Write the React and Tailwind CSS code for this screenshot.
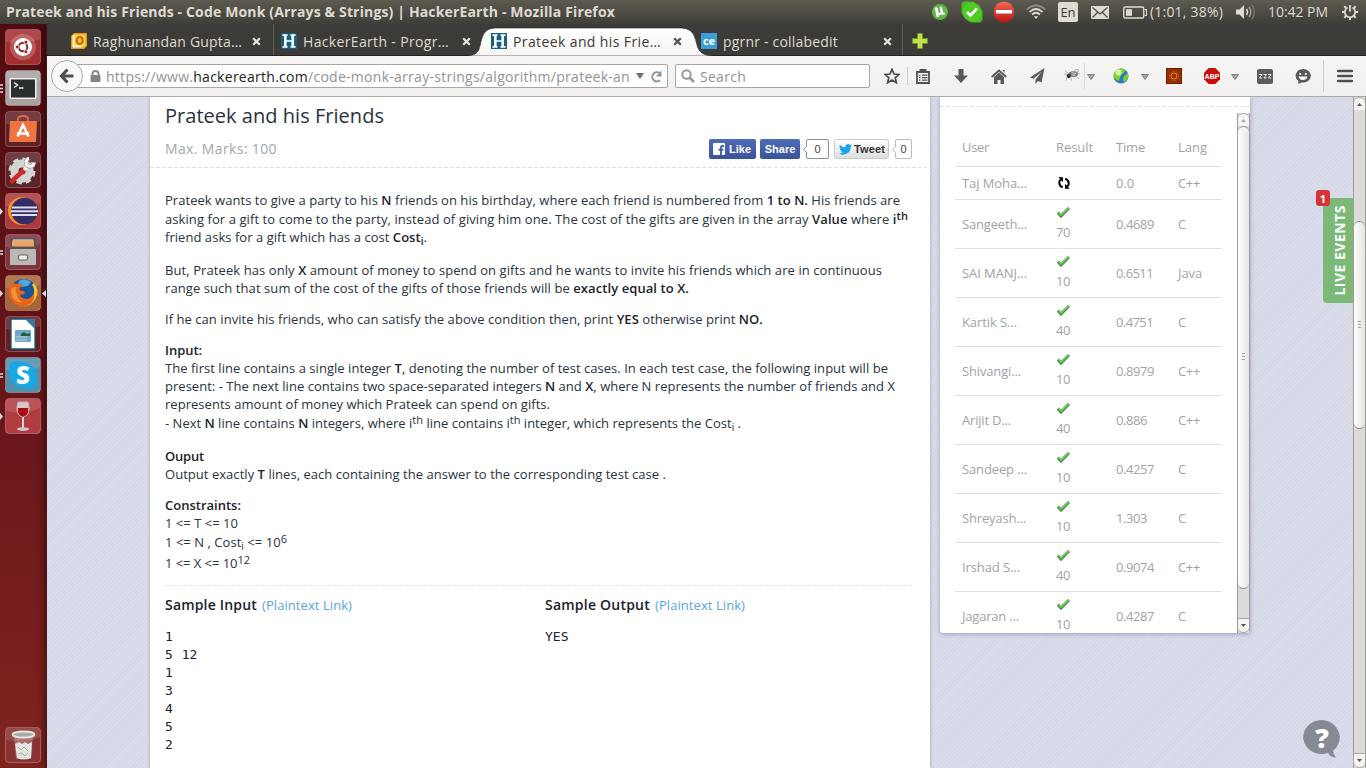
import React, { useLayoutEffect, useRef } from "react";

/* Single line of text whose letter spacing is adjusted so it fills `w` pixels. */
function Fit({ w, className = "", children }) {
  const ref = useRef(null);
  useLayoutEffect(() => {
    const el = ref.current;
    el.style.letterSpacing = "0px";
    const natural = el.getBoundingClientRect().width;
    el.style.letterSpacing = (w - natural) / el.textContent.length + "px";
  }, [w]);
  return (
    <span ref={ref} className={"inline-block shrink-0 justify-self-start whitespace-pre " + className}>
      {children}
    </span>
  );
}

const Sup = ({ children }) => <span className="relative -top-[4px] text-[11px] leading-none">{children}</span>;
const Sub = ({ children }) => <span className="relative top-[3px] text-[10px] leading-none">{children}</span>;
const B = ({ children }) => <b className="font-semibold text-[#1b222b]">{children}</b>;

/* ---------- top panel ---------- */
function TopPanel() {
  return (
    <header className="flex h-6 shrink-0 items-center bg-linear-to-b from-[#5d5a50] to-[#403e39] pl-[6px] font-['Open_Sans',sans-serif] text-[14px] leading-6 text-[#dfdbd2]">
      <Fit w={609} className="font-bold">Prateek and his Friends - Code Monk (Arrays &amp; Strings) | HackerEarth - Mozilla Firefox</Fit>
      <svg className="ml-[317px] shrink-0" width="16" height="18" viewBox="0 0 16 18">
        <circle cx="8" cy="9" r="8" fill="#62b54a" />
        <path d="M3.800 4.500l2 9.500M4.500 5l1 4.500c.8 2.500 4 2 4.200-.5L8.800 4M9.600 8.500c.4 2 1.500 2.600 3 1.800" fill="none" stroke="#fff" strokeWidth="2.300" />
      </svg>
      <svg className="ml-[13px] shrink-0" width="22" height="22" viewBox="0 0 22 22">
        <rect x=".5" y=".5" width="14" height="14" rx="4" fill="#45c31c" />
        <rect x="7.500" y="7.500" width="14" height="14" rx="4" fill="#45c31c" />
        <circle cx="11" cy="11" r="9.500" fill="#50cb24" />
        <path d="M6 11l3.500 3.500L16 7.500" fill="none" stroke="#fff" strokeWidth="2.800" />
      </svg>
      <svg className="ml-[10px] shrink-0" width="22" height="22" viewBox="0 0 22 22">
        <defs><linearGradient id="stop" x2="0" y2="1"><stop stopColor="#f0685c" /><stop offset="1" stopColor="#b8140f" /></linearGradient></defs>
        <circle cx="11" cy="11" r="10.500" fill="url(#stop)" />
        <rect x="3" y="9" width="16" height="3.500" fill="#fff" />
      </svg>
      <svg className="ml-[11px] shrink-0" width="20" height="16" viewBox="0 0 20 16" fill="none" strokeWidth="1.700">
        <path d="M.7 5.500Q10-2.500 19.300 5.500" stroke="#8d8a82" />
        <path d="M3.500 8Q10 2 16.500 8" stroke="#dfdbd2" />
        <path d="M6 10.500Q10 7 14 10.500" stroke="#dfdbd2" />
        <path d="M7.800 12.300h4.400L10 15z" fill="#dfdbd2" stroke="none" />
      </svg>
      <span className="ml-[12px] flex h-5 w-5 shrink-0 items-center justify-center rounded-[2px] bg-[#dfdbd2] text-[13px] leading-none text-[#3c3b37]">En</span>
      <svg className="ml-[13px] shrink-0" width="18" height="13" viewBox="0 0 18 13">
        <rect width="18" height="13" rx="1" fill="#dfdbd2" />
        <path d="M1.500 1.500L9 8l7.500-6.500M1.500 11.500l5-5M16.500 11.500l-5-5" fill="none" stroke="#4c4a43" strokeWidth="1.200" />
      </svg>
      <svg className="ml-[14px] shrink-0" width="24" height="13" viewBox="0 0 24 13">
        <rect x=".75" y="1" width="20" height="11" rx="1.500" fill="none" stroke="#dfdbd2" strokeWidth="1.400" />
        <rect x="3" y="3.200" width="6" height="6.600" fill="#dfdbd2" />
        <path d="M21.500 3.500h2v6h-2" fill="none" stroke="#dfdbd2" strokeWidth="1.200" />
      </svg>
      <Fit w={73} className="ml-[3px]">(1:01, 38%)</Fit>
      <svg className="ml-[13px] shrink-0" width="20" height="16" viewBox="0 0 20 16" fill="none" strokeWidth="1.500">
        <path d="M0 5.500h3.500L8 1v14l-4.500-4.500H0z" fill="#dfdbd2" />
        <path d="M10.500 5q2 3 0 6" stroke="#dfdbd2" />
        <path d="M13 3q3.500 5 0 10" stroke="#a3a097" />
        <path d="M16 1q4.500 7 0 14" stroke="#78756c" />
      </svg>
      <Fit w={60} className="ml-[12px]">10:42 PM</Fit>
      <svg className="ml-[14px] shrink-0" width="16" height="16" viewBox="0 0 16 16" fill="none" stroke="#dfdbd2">
        <path d="M5.500 3.500a5.200 5.200 0 1 0 5 0" strokeWidth="1.700" />
        <path d="M8 1v6.500" strokeWidth="1.800" />
        <path d="M2.300 2.300l1.700 1.700M13.700 2.300L12 4M0 8h2.500M13.500 8H16M2.300 13.700L4 12M13.700 13.700L12 12M8 13.500V16" strokeWidth="2" />
      </svg>
    </header>
  );
}

/* ---------- launcher ---------- */
const Tile = ({ bg, children, left, right }) => (
  <div className="relative flex h-[41px] items-start justify-center">
    {left && (
      <svg className="absolute top-[14px] left-0" width="4" height="9" viewBox="0 0 4 9">
        {left === "arrow" && <path d="M0 1l3 3.500L0 8z" fill="#ddd" />}
        {left === "two" && <path d="M0 3h3M0 6h3" stroke="#ddd" strokeWidth="1.300" />}
        {left === "three" && <path d="M0 1h3M0 4.500h3M0 8h3" stroke="#ddd" strokeWidth="1.300" />}
      </svg>
    )}
    <svg width="36" height="36" viewBox="0 0 36 36">
      <rect x=".5" y=".5" width="35" height="35" rx="3.500" fill={bg} stroke="#fff" strokeOpacity=".25" />
      <path d="M1 4q0-3 3-3h28q3 0 3 3v6Q18 17 1 13z" fill="#fff" opacity=".12" />
      {children}
    </svg>
    {right && (
      <svg className="absolute top-[15px] right-0" width="4" height="7" viewBox="0 0 4 7"><path d="M4 0v7L0 3.500z" fill="#ddd" /></svg>
    )}
  </div>
);

function Launcher() {
  return (
    <aside className="flex w-[47px] shrink-0 flex-col border-r border-[#3a1a1a] bg-linear-to-b from-[#500c10] via-[#68151a] to-[#80241f] pt-[5px] shadow-[inset_-7px_0_7px_-5px_rgba(30,0,0,0.5)]">
      <Tile bg="#a52e31">
        <circle cx="18" cy="18" r="13" fill="#fff" opacity=".2" />
        <circle cx="18" cy="18" r="9" fill="#fff" />
        <circle cx="18" cy="18" r="4.300" fill="none" stroke="#8e2327" strokeWidth="2" />
        <g fill="#8e2327" stroke="#fff" strokeWidth=".8"><circle cx="12.300" cy="18" r="1.900" /><circle cx="20.900" cy="13.200" r="1.900" /><circle cx="20.900" cy="22.800" r="1.900" /></g>
      </Tile>
      <Tile bg="#a9a3a4" left="three">
        <rect x="4.500" y="8" width="27" height="21" rx="1" fill="#efefef" />
        <rect x="6" y="9.500" width="24" height="18" fill="#2a2e2f" />
        <path d="M9 12.500l3.500 2.500L9 17.500M14 18h4.500" fill="none" stroke="#eee" strokeWidth="1.500" />
      </Tile>
      <Tile bg="#5f2226">
        <path d="M13 11V8q0-3 5-3t5 3v3" fill="none" stroke="#d96b4b" strokeWidth="2" />
        <path d="M5 10h27l-1 21H4z" fill="#ee7440" />
        <path d="M12.500 25.500L18 14l5.500 11.500M12 22.500h12" fill="none" stroke="#fff" strokeWidth="2.600" />
      </Tile>
      <Tile bg="#5a2428">
        <circle cx="17" cy="19" r="7.500" fill="none" stroke="#d4d4d4" strokeWidth="8" />
        <circle cx="17" cy="19" r="12" fill="none" stroke="#d4d4d4" strokeWidth="3" strokeDasharray="5.400 4.020" />
        <path d="M7 29L19 18" stroke="#cf2a27" strokeWidth="4.500" strokeLinecap="round" />
        <path d="M19 18l5-5" stroke="#f2f2f2" strokeWidth="3.500" />
        <path d="M24 6.500a4 4 0 1 0 5 4" fill="none" stroke="#888" strokeWidth="4.200" />
        <path d="M24 6.500a4 4 0 1 0 5 4" fill="none" stroke="#fff" strokeWidth="3" />
      </Tile>
      <Tile bg="#ad3a3c" left="arrow">
        <circle cx="17" cy="18" r="14" fill="#f3902a" />
        <circle cx="19.500" cy="18" r="13.300" fill="#332c66" />
        <path d="M7 14.500h25M6 18.200h27M7 22h25" stroke="#dfe0ee" strokeWidth="1.900" />
      </Tile>
      <Tile bg="#803340" left="two">
        <rect x="5" y="4" width="26" height="13" rx="2" fill="#5a5450" />
        <path d="M7 8h22M7 11h22" stroke="#f0a261" strokeWidth="3" />
        <path d="M8 6h20" stroke="#eee" />
        <rect x="5" y="15" width="26" height="16" rx="1" fill="#b9b8b5" />
        <rect x="13.500" y="21" width="9" height="5" rx="1.500" fill="#eee" stroke="#666" strokeWidth="1.200" />
      </Tile>
      <Tile bg="#a5673a" left="arrow" right>
        <circle cx="18.500" cy="17.500" r="13.500" fill="#1b5596" />
        <path d="M15 5q6-2 11 2l-3 4-6 1-4-4z" fill="#4ea6dc" />
        <path d="M29 8q6 8 1.500 16-4.500 7.500-12 7.500 10-4 10.500-12Q30 13 27 10z" fill="#fbc62d" />
        <path d="M6.500 7q-3.500 5-2.500 12 1.500 9 10 12 9 2 14-5 2-4 1-8-3 6-8 6-5-.5-6-4 3 0 5-2l-1-2-4-.5q-1-2 1-4l2-2q-3-1-6-.5Q7.500 9 6.500 7z" fill="#e8631c" />
        <path d="M6 14q2-2 5-2-1 4 1 7 0 6 6 8-7 1-10-4-2-4-2-9z" fill="#f4923a" />
      </Tile>
      <Tile bg="#651e23">
        <path d="M6 3h17l7 8v22H6z" fill="#fff" stroke="#135878" strokeWidth="1.300" />
        <path d="M20 3h10v10z" fill="#37799c" />
        <rect x="10" y="14" width="16" height="12" rx="1" fill="#6fa7c7" />
        <path d="M16 18l3-2 3 2 3-1v3h-9z" fill="#285c3f" />
        <path d="M11 21h11M11 24h11" stroke="#b8d8e8" />
      </Tile>
      <Tile bg="#5290ac" left="two">
        <circle cx="12" cy="12" r="8" fill="#17a9e6" /><circle cx="24" cy="24" r="8" fill="#17a9e6" /><circle cx="18" cy="18" r="12.500" fill="#17a9e6" />
        <text x="18" y="26.500" textAnchor="middle" fontFamily="Open Sans" fontWeight="800" fontSize="24" fill="#fff">S</text>
      </Tile>
      <Tile bg="#b13d41" left="arrow">
        <path d="M13 4h10q3 10-2 14-3 2-6 0-5-4-2-14z" fill="#dac8c8" stroke="#c4b0b0" />
        <path d="M13 10h10q1 6-3 8-2 1-4 0-4-2-3-8z" fill="#a60d14" />
        <path d="M18 19v11" stroke="#dcd5d5" strokeWidth="2" />
        <ellipse cx="18" cy="31" rx="6" ry="1.800" fill="#cfc8c8" />
      </Tile>
      <div className="mt-auto">
        <Tile bg="#8a3131">
          <path d="M9 9h19l-2 23H11z" fill="#d3cfcf" opacity=".35" />
          <path d="M10 17l4-2 3 2 3-2 3 2 4-2-1 16q-7 3-14 0z" fill="#e4e4e0" />
          <path d="M13 20l3 3 3-3 4 4M13 27l4-1 3 3 3-3" fill="none" stroke="#a8aaa4" />
          <ellipse cx="18.500" cy="7.500" rx="11" ry="3" fill="#a9a9a6" stroke="#e6e6e2" strokeWidth="1.800" />
        </Tile>
      </div>
    </aside>
  );
}

/* ---------- tabs ---------- */
const Close = ({ color = "#e3e0da" }) => (
  <svg className="ml-auto shrink-0" width="9" height="9" viewBox="0 0 9 9"><path d="M1.200 1.200l6.600 6.600M7.800 1.200L1.200 7.800" stroke={color} strokeWidth="2.300" /></svg>
);
const HIcon = () => (
  <svg className="shrink-0" width="16" height="16" viewBox="0 0 16 16">
    <rect width="16" height="16" fill="#17617f" />
    <path d="M1.500 2.200h5M9.500 2.200h5M1.500 13.800h5M9.500 13.800h5M4.500 8h7" stroke="#fff" strokeWidth="1.700" />
    <path d="M4.300 2v12M11.700 2v12" stroke="#fff" strokeWidth="2.600" />
  </svg>
);

function TabStrip() {
  const label = "ml-[6px] leading-8 relative top-px";
  return (
    <div className="relative flex h-8 shrink-0 border-b border-[#232220] bg-[#3c3b37] pl-6 text-[14px] text-[#dfdbd2]">
      <div className="flex w-[202px] items-center pt-[3px] pr-[12px]">
        <svg className="shrink-0" width="16" height="16" viewBox="0 0 16 16">
          <path d="M3 0h13v13l-3 3H0V3z" fill="#e79a13" /><path d="M3 1.500h11.500v11l-2 2h-11V3z" fill="#fbd34b" />
          <path d="M2.500 2.500v11h8" fill="none" stroke="#fff" strokeWidth="1.500" />
          <ellipse cx="8.700" cy="7.500" rx="3" ry="3.500" fill="none" stroke="#d16c05" strokeWidth="2.400" />
        </svg>
        <Fit w={149} className={label}>Raghunandan Gupta…</Fit>
        <Close />
      </div>
      <div className="flex w-[210px] items-center border-l border-[#605e58] pt-[3px] pr-[12px] pl-[7px]">
        <HIcon /><Fit w={146} className={label}>HackerEarth - Progr…</Fit><Close />
      </div>
      <div className="relative flex w-[210px] items-center pt-[3px] pr-[11px] pl-[8px] text-[#3c3b37]">
        <svg className="absolute top-[3px] -left-[16px]" width="246" height="29" viewBox="0 0 246 29">
          <defs><linearGradient id="tab" x2="0" y2="1"><stop stopColor="#fff" /><stop offset="1" stopColor="#f5f4f2" /></linearGradient></defs>
          <path d="M0 29C14 28 12 20 15 11Q18 1 28 1H214Q225 1 228 11C231 20 230 28 246 29z" fill="url(#tab)" stroke="#2a2926" strokeWidth=".6" />
        </svg>
        <div className="relative flex w-full items-center">
          <HIcon /><Fit w={148} className={label}>Prateek and his Frie…</Fit><Close color="#55534e" />
        </div>
      </div>
      <div className="flex w-[209px] items-center pt-[3px] pr-[10px] pl-[8px]">
        <span className="flex h-4 w-4 shrink-0 items-center justify-center bg-[#3a9fd6] pb-[2px] text-[11px] leading-none font-bold text-white">ce</span>
        <Fit w={115} className={label}>pgrnr - collabedit</Fit><Close />
      </div>
      <div className="flex items-center border-l border-[#605e58] pt-[3px] pl-[9px]">
        <svg width="16" height="16" viewBox="0 0 16 16"><path d="M5.500.5h5v5h5v5h-5v5h-5v-5h-5v-5h5z" fill="#c5dd4e" stroke="#66962a" /></svg>
      </div>
    </div>
  );
}

const Caret = ({ className }) => (
  <svg className={"shrink-0 " + className} width="8" height="6" viewBox="0 0 8 6"><path d="M.5.500h7L4 5.500z" fill="#a6a6a4" stroke="#6d6d6b" strokeWidth=".8" /></svg>
);

function Toolbar() {
  return (
    <div className="flex h-[41px] shrink-0 items-center border-b border-[#b0aaa4] bg-linear-to-b from-[#f6f5f4] to-[#f1f0ee] pl-[4px] text-[14px]">
      <div className="z-10 flex h-8 w-8 shrink-0 items-center justify-center rounded-full border border-[#a3adb6] bg-[#f8f8f8]">
        <svg width="16" height="16" viewBox="0 0 16 16"><path d="M8.500 1.500L2.500 8l6 6.500M3 8h11.500" fill="none" stroke="#4d4f51" strokeWidth="3.200" /></svg>
      </div>
      <div className="-ml-[6px] flex h-6 w-[591px] shrink-0 items-center rounded-r-[2px] border border-[#a9a5a0] bg-white pl-[12px]">
        <svg className="shrink-0" width="11" height="12" viewBox="0 0 11 12"><path d="M2.500 6V4a3 3 0 0 1 6 0v2" fill="none" stroke="#848484" strokeWidth="1.800" /><rect x=".5" y="5" width="10" height="7" rx=".8" fill="#848484" /></svg>
        <Fit w={524} className="relative top-px ml-[5px] leading-5 text-[#939393]">https://www.<span className="text-[#222]">hackerearth.com</span>/code-monk-array-strings/algorithm/prateek-an</Fit>
        <svg className="ml-[6px] shrink-0" width="8" height="6" viewBox="0 0 8 6"><path d="M0 0h8L4 6z" fill="#6f6f6f" /></svg>
        <svg className="ml-[6px] shrink-0" width="13" height="13" viewBox="0 0 13 13"><path d="M10 10.200A4.600 4.600 0 1 1 9.500 3" fill="none" stroke="#8797a4" strokeWidth="2" /><path d="M11.500.5v6H6z" fill="#8797a4" /></svg>
      </div>
      <div className="ml-[7px] flex h-6 w-[195px] shrink-0 items-center rounded-[2px] border border-[#a9a5a0] bg-white pl-[5px]">
        <svg width="14" height="14" viewBox="0 0 14 14" fill="none" stroke="#999"><circle cx="5.500" cy="5.500" r="4.200" strokeWidth="2" /><path d="M8.500 8.500l4.500 4.500" strokeWidth="2.600" /></svg>
        <Fit w={46} className="relative top-px ml-[5px] leading-5 text-[#939393]">Search</Fit>
      </div>
      <svg className="ml-[14px] shrink-0" width="16" height="16" viewBox="0 0 16 16"><path d="M8 1.300l2 4.700 5 .4-3.800 3.300 1.200 5L8 12l-4.400 2.700 1.200-5L1 6.400 6 6z" fill="none" stroke="#4c4c4c" strokeWidth="1.700" /></svg>
      <span className="ml-[7px] h-[18px] w-px shrink-0 bg-[#cfcfcf]" />
      <svg className="ml-[8px] shrink-0" width="14" height="15" viewBox="0 0 14 15"><path d="M1 3h12v11H1z" fill="#f3f3f3" stroke="#4f4f4f" strokeWidth="1.800" /><path d="M4.500 3V1h5v2" fill="none" stroke="#4f4f4f" strokeWidth="1.800" /><path d="M3 6.200h1.500M6 6.200h5.500M3 8.700h1.500M6 8.700h5.500M3 11.200h1.500M6 11.200h5.500" stroke="#4f4f4f" strokeWidth="1.300" /></svg>
      <svg className="ml-[24px] shrink-0" width="14" height="14" viewBox="0 0 14 14"><path d="M4.500 0h5v6.500H14L7 14 0 6.500h4.500z" fill="#595959" /></svg>
      <svg className="ml-[23px] shrink-0" width="16" height="15" viewBox="0 0 16 15"><path d="M.7 8L8 1.500 15.300 8" fill="none" stroke="#595959" strokeWidth="2" /><path d="M3 8l5-4.500L13 8v7H9.500v-4h-3v4H3zM11.500 1h2v3z" fill="#595959" /></svg>
      <svg className="ml-[23px] shrink-0" width="15" height="16" viewBox="0 0 15 16"><path d="M14.500 0L0 9.500l3.500 1.200L12 3.500 5.500 11.500V16l2.500-3 3.500 1.500z" fill="#595959" /></svg>
      <svg className="ml-[19px] -mt-[2px] shrink-0" width="16" height="13" viewBox="0 0 17 13"><ellipse cx="10" cy="5" rx="5" ry="3" fill="#777" /><circle cx="5" cy="7" r="2.300" fill="#333" /><path d="M1 1.500l4 3M0 5h4M3 8l-1 4M7 8l1 4M10 2l3-2 3 1-3 2M12 7l4 3M14 4.500h3" fill="none" stroke="#999" strokeWidth=".8" /><path d="M8 3.500l5 1M8 6l4 0" stroke="#ddd" /></svg>
      <span className="ml-[4px] h-[26px] w-px shrink-0 bg-[#d9d9d9]" />
      <Caret className="ml-[2px] mt-[2px]" />
      <svg className="ml-[18px] shrink-0" width="16" height="16" viewBox="0 0 16 16"><circle cx="8" cy="8" r="7.500" fill="#2f74cf" /><path d="M2 3.500Q6-1 12 1.500q0 3-3 4.500L7 9l-1 4Q0 11 .7 6zM10.500 9l4.500-4q1 6-3.500 9-2-2-1-5z" fill="#7fd81e" /><circle cx="5.500" cy="4.500" r="3" fill="#d9f5ae" /></svg>
      <Caret className="ml-[12px] mt-[2px]" />
      <svg className="ml-[17px] shrink-0" width="16" height="16" viewBox="0 0 16 16"><rect x=".5" y=".5" width="15" height="15" fill="#952d05" stroke="#6e1f00" /><circle cx="8" cy="8" r="3" fill="none" stroke="#e4872a" /><circle cx="8" cy="8" r="4.500" fill="none" stroke="#e4872a" strokeDasharray="1 1.800" /></svg>
      <svg className="ml-[22px] shrink-0" width="16" height="16" viewBox="0 0 16 16"><path d="M4.700 0h6.600L16 4.700v6.600L11.300 16H4.700L0 11.300V4.700z" fill="#c70d0d" /><text x="8" y="10.800" textAnchor="middle" fontFamily="Liberation Sans" fontWeight="700" fontSize="7" fill="#fff">ABP</text></svg>
      <Caret className="ml-[11px] mt-[2px]" />
      <svg className="ml-[18px] shrink-0" width="16" height="15" viewBox="0 0 16 15"><rect width="16" height="15" rx="2" fill="#5c5c5c" /><path d="M2 5.500h3L2.500 9H5M6.500 5.500h3L7 9h2.500M11 5.500h3L11.500 9H14" fill="none" stroke="#e8e8e8" /></svg>
      <svg className="ml-[22px] shrink-0" width="16" height="15" viewBox="0 0 16 15"><path d="M8 0a8 6.800 0 1 1-1.500 13.500L3 15l.5-3A8 6.800 0 0 1 8 0z" fill="#595959" /><circle cx="5.200" cy="5" r="1.100" fill="#fff" /><circle cx="10.800" cy="5" r="1.100" fill="#fff" /><path d="M3.500 7.500h9Q11.500 11 8 11T3.500 7.500z" fill="#fff" /></svg>
      <span className="ml-[12px] h-[32px] w-px shrink-0 bg-[#c8ccd0]" />
      <svg className="ml-[13px] shrink-0" width="16" height="14" viewBox="0 0 16 14"><path d="M1 2h14M1 7h14M1 12h14" stroke="#4f4f4f" strokeWidth="2.400" strokeLinecap="round" /></svg>
    </div>
  );
}

/* ---------- page ---------- */
const Count = ({ w, border, children }) => (
  <span className="relative flex h-5 items-center">
    <svg className="relative z-10 -mr-px" width="4" height="7" viewBox="0 0 4 7"><path d="M4 0L.7 3.500 4 7" fill="#fff" stroke={border} /></svg>
    <span className={w + " flex h-5 items-center justify-center rounded-[2px] border bg-white text-[11px] text-[#444]"} style={{ borderColor: border }}>{children}</span>
  </span>
);

function Problem() {
  const row = "h-[18px] leading-[18px]";
  return (
    <main className="flex w-[780px] shrink-0 flex-col bg-white pl-[15px] text-[13px] text-[#29323d] shadow-[0_0_3px_rgba(90,100,150,0.5)]">
      <h1 className="mt-[6px] h-[26px] text-[20px] leading-[26px]"><Fit w={219}>Prateek and his Friends</Fit></h1>
      <div className="mt-[10px] flex h-5 items-center justify-between pr-[18px]">
        <Fit w={112} className="text-[14px] leading-[20px] text-[#a4a7aa]">Max. Marks: 100</Fit>
        <div className="flex h-5 items-center font-['Liberation_Sans',sans-serif] text-[11px] font-bold text-white">
          <span className="flex h-5 w-[47px] items-center rounded-[2px] bg-linear-to-b from-[#4f6cb8] to-[#3a529c] pl-[4px]">
            <svg className="shrink-0" width="12" height="12" viewBox="0 0 12 12"><rect width="12" height="12" rx="1" fill="#fff" /><path d="M8 12V4.500Q8 3 9.500 3H11M5.500 6.800h5" fill="none" stroke="#4460ab" strokeWidth="1.900" /></svg>
            <span className="ml-[4px]">Like</span>
          </span>
          <span className="ml-[4px] flex h-5 w-[40px] items-center justify-center rounded-[2px] bg-linear-to-b from-[#4f6cb8] to-[#3a529c]">Share</span>
          <span className="ml-[3px] font-normal"><Count w="w-[23px]" border="#8a8fa0">0</Count></span>
          <span className="ml-[5px] flex h-5 w-[55px] items-center rounded-[3px] border border-[#c9c9c9] bg-linear-to-b from-white to-[#dedede] pl-[4px] text-[#333]">
            <svg className="shrink-0" width="13" height="11" viewBox="0 0 24 20"><path d="M24 2.400a10 10 0 0 1-2.800.8A5 5 0 0 0 23.300.500a10 10 0 0 1-3.100 1.200 4.900 4.900 0 0 0-8.400 4.500A14 14 0 0 1 1.700 1a4.900 4.900 0 0 0 1.500 6.600 5 5 0 0 1-2.200-.6 4.900 4.900 0 0 0 4 4.800 5 5 0 0 1-2.300.1 4.900 4.900 0 0 0 4.600 3.400A9.900 9.900 0 0 1 0 17.300 14 14 0 0 0 21.500 4.900 10 10 0 0 0 24 2.400z" fill="#1ba5e8" /></svg>
            <Fit w={31} className="ml-[2px]">Tweet</Fit>
          </span>
          <span className="ml-[3px] font-normal"><Count w="w-[17px]" border="#bbb">0</Count></span>
        </div>
      </div>
      <div className="mt-[8px] -ml-[15px] h-px w-[777px] bg-[repeating-linear-gradient(90deg,#e3e3e3_0_4px,transparent_4px_6px)]" />

      <div className={"mt-[23px] " + row}><Fit w={735}>Prateek wants to give a party to his <B>N</B> friends on his birthday, where each friend is numbered from <B>1 to N.</B> His friends are</Fit></div>
      <div className={"mt-px " + row}><Fit w={743}>asking for a gift to come to the party, instead of giving him one. The cost of the gifts are given in the array <B>Value</B> where <B>i<Sup>th</Sup></B></Fit></div>
      <div className={row}><Fit w={262}>friend asks for a gift which has a cost <B>Cost<Sub>i</Sub></B>.</Fit></div>
      <div className={"mt-[15px] " + row}><Fit w={717}>But, Prateek has only <B>X</B> amount of money to spend on gifts and he wants to invite his friends which are in continuous</Fit></div>
      <div className={row}><Fit w={524}>range such that sum of the cost of the gifts of those friends will be <B>exactly equal to X.</B></Fit></div>
      <div className={"mt-[13px] " + row}><Fit w={598}>If he can invite his friends, who can satisfy the above condition then, print <B>YES</B> otherwise print <B>NO.</B></Fit></div>
      <div className={"mt-[13px] " + row}><Fit w={37}><B>Input:</B></Fit></div>
      <div className={row}><Fit w={723}>The first line contains a single integer <B>T</B>, denoting the number of test cases. In each test case, the following input will be</Fit></div>
      <div className={row}><Fit w={730}>present: - The next line contains two space-separated integers <B>N</B> and <B>X</B>, where N represents the number of friends and X</Fit></div>
      <div className={row}><Fit w={385}>represents amount of money which Prateek can spend on gifts.</Fit></div>
      <div className={"mt-px " + row}><Fit w={576}>- Next <B>N</B> line contains <B>N</B> integers, where i<Sup>th</Sup> line contains i<Sup>th</Sup> integer, which represents the Cost<Sub>i</Sub> .</Fit></div>
      <div className={"mt-[15px] " + row}><Fit w={39}><B>Ouput</B></Fit></div>
      <div className={row}><Fit w={501}>Output exactly <B>T</B> lines, each containing the answer to the corresponding test case .</Fit></div>
      <div className={"mt-[13px] " + row}><Fit w={76}><B>Constraints:</B></Fit></div>
      <div className={row}><Fit w={73}>{"1 <= T <= 10"}</Fit></div>
      <div className={"mt-px " + row}><Fit w={122}>{"1 <= N , Cost"}<Sub>i</Sub>{" <= 10"}<Sup>6</Sup></Fit></div>
      <div className={"mt-[3px] " + row}><Fit w={85}>{"1 <= X <= 10"}<Sup>12</Sup></Fit></div>
      <div className="mt-[13px] h-px w-[747px] shrink-0 bg-[repeating-linear-gradient(90deg,#e3e3e3_0_4px,transparent_4px_6px)]" />

      <div className="mt-[9px] flex">
        {[["Sample Input", 92, "1\n5 12\n1\n3\n4\n5\n2"], ["Sample Output", 105, "YES"]].map(([t, w, body]) => (
          <section key={t} className="w-[380px]">
            <div className="flex h-5 items-baseline leading-5">
              <Fit w={w} className="text-[14px] font-semibold text-[#1b222b]">{t}</Fit>
              <Fit w={90} className="ml-[5px] text-[#5aa5e0]">(Plaintext Link)</Fit>
            </div>
            <pre className="mt-[13px] font-['DejaVu_Sans_Mono',monospace] text-[13px] leading-[18px] text-[#1b222b] [word-spacing:1px]">{body}</pre>
          </section>
        ))}
      </div>
    </main>
  );
}

const rows = [
  ["Sangeeth...", 65, "70", "0.4689", 38, "C"],
  ["SAI MANJ...", 65, "10", "0.6511", 37, "Java"],
  ["Kartik S...", 55, "40", "0.4751", 37, "C"],
  ["Shivangi...", 59, "10", "0.8979", 38, "C++"],
  ["Arijit D...", 49, "40", "0.886", 31, "C++"],
  ["Sandeep ...", 65, "10", "0.4257", 38, "C"],
  ["Shreyash...", 64, "10", "1.303", 31, "C"],
  ["Irshad S...", 58, "40", "0.9074", 38, "C++"],
  ["Jagaran ...", 57, "10", "0.4287", 38, "C"],
];
const langWidth = { C: 8, "C++": 22, Java: 24 };

const Check = () => (
  <svg className="relative -top-px left-px" width="13" height="12" viewBox="0 0 13 12"><path d="M1 6.500l3 3.500L12 2" fill="none" stroke="#3f8f3d" strokeWidth="3" /><path d="M1.300 6l2.700 3L11.600 1.600" fill="none" stroke="#7cc66f" strokeWidth="1.800" /></svg>
);

function ScrollBar({ className, top, thumb, grip, dim }) {
  return (
    <div className={"flex w-[13px] shrink-0 flex-col border-x border-[#a19d99] bg-[#dddbd8] " + className}>
      <div className="flex h-[13px] shrink-0 items-center justify-center rounded-t-full border-t border-[#aaa6a2] bg-[#f5f4f2]">
        <svg width="5" height="3" viewBox="0 0 5 3"><path d="M0 3h5L2.500 0z" fill={dim ? "#aaa" : "#555"} /></svg>
      </div>
      <div className={top} />
      <div className={"flex shrink-0 items-center justify-center rounded-full border-y border-[#8f8b87] bg-linear-to-r from-white to-[#e6e4e1] " + thumb}>
        <svg className={grip} width="3" height="7" viewBox="0 0 3 7"><path d="M0 .5h3M0 3.500h3M0 6.500h3" stroke="#a6a29e" /></svg>
      </div>
      <div className="mt-auto flex h-[15px] shrink-0 items-center justify-center rounded-b-full border-y border-[#aaa6a2] bg-[#f5f4f2]">
        <svg width="5" height="3" viewBox="0 0 5 3"><path d="M0 0h5L2.500 3z" fill="#555" /></svg>
      </div>
    </div>
  );
}

function Submissions() {
  const grid = "grid grid-cols-[94px_60px_62px_44px] items-center pl-[7px]";
  return (
    <aside className="ml-[10px] flex h-[536px] w-[310px] shrink-0 flex-col overflow-hidden rounded-b-[3px] bg-white text-[13px] text-[#9fa3a7] shadow-[0_1px_4px_rgba(90,100,150,0.5)]">
      <div className="mt-[9px] h-px shrink-0 bg-[repeating-linear-gradient(90deg,#e3e3e3_0_4px,transparent_4px_6px)]" />
      <div className="mt-[6px] flex h-[520px] shrink-0">
        <div className="ml-[15px] w-[267px] overflow-hidden pt-[16px]">
          <div className={grid + " h-[38px] border-b border-[#e0e0e0]"}>
            <Fit w={27}>User</Fit><Fit w={37}>Result</Fit><Fit w={29}>Time</Fit><Fit w={29}>Lang</Fit>
          </div>
          <div className={grid + " h-[33px] border-b border-[#e0e0e0]"}>
            <Fit w={65} className="pt-px">Taj Moha...</Fit>
            <svg className="ml-[2px]" width="12" height="12" viewBox="0 0 12 12">
              <path d="M4.800 10.400Q1 9 1.300 5.200 1.500 3.500 2.800 2.600M7.200 1.600Q11 3 10.700 6.800 10.500 8.500 9.200 9.400" fill="none" stroke="#000" strokeWidth="2" />
              <path d="M.3.300H5v4.900zM11.700 11.700H7V6.800z" fill="#000" />
            </svg>
            <Fit w={18} className="pt-px">0.0</Fit><Fit w={22} className="pt-px">C++</Fit>
          </div>
          {rows.map(([user, uw, pts, time, tw, lang]) => (
            <div key={user} className={grid + " h-[49px] border-b border-[#e0e0e0]"}>
              <Fit w={uw} className="pt-[2px]">{user}</Fit>
              <div className="flex flex-col pb-px"><Check /><span className="mt-[4px] h-[18px] leading-[18px]"><Fit w={14}>{pts}</Fit></span></div>
              <Fit w={tw} className="pt-[2px]">{time}</Fit>
              <Fit w={langWidth[lang]} className="pt-[2px]">{lang}</Fit>
            </div>
          ))}
        </div>
        <ScrollBar className="ml-auto" top="h-0" thumb="h-[463px]" grip="relative -top-px" dim />
      </div>
    </aside>
  );
}

function Page() {
  return (
    <div className="relative flex min-h-0 flex-1 overflow-hidden bg-[#d4d8e7] bg-[repeating-linear-gradient(135deg,rgba(255,255,255,0.16)_0_1px,transparent_1px_3px)]">
      <div className="w-[103px] shrink-0" />
      <Problem />
      <Submissions />
      <ScrollBar className="ml-auto" top="h-[111px] shrink-0" thumb="h-[208px]" grip="relative -top-px" />
      <div className="absolute top-[101px] right-[13px] flex h-[105px] w-[30px] items-center justify-center rounded-l-[4px] bg-[#7cb877] pl-[4px] text-[14px] font-bold text-white">
        <span className="rotate-180 leading-[18px] tracking-[0.5px] whitespace-nowrap [writing-mode:vertical-rl]">LIVE EVENTS</span>
        <span className="absolute -top-[8px] -left-[7px] flex h-4 w-[14px] items-center justify-center rounded-[3px] bg-[#d53338] text-[11px] leading-none">1</span>
      </div>
      <div className="absolute right-[25px] bottom-[7px] h-[42px] w-[38px]">
        <svg width="38" height="42" viewBox="0 0 38 42">
          <path d="M19 1a18.500 17 0 1 0 6 33q3 4.500 8 4.500-3-3-3-6.500A18.500 17.500 0 0 0 19 1z" fill="#858a94" />
          <text x="19" y="28.500" textAnchor="middle" fontFamily="Open Sans" fontWeight="800" fontSize="27" fill="#fff">?</text>
        </svg>
      </div>
    </div>
  );
}

export default function App() {
  return (
    <div className="flex h-[768px] w-[1366px] flex-col overflow-hidden font-['Open_Sans',sans-serif]">
      <TopPanel />
      <div className="flex min-h-0 flex-1">
        <Launcher />
        <div className="flex min-w-0 flex-1 flex-col">
          <TabStrip />
          <Toolbar />
          <Page />
        </div>
      </div>
    </div>
  );
}
